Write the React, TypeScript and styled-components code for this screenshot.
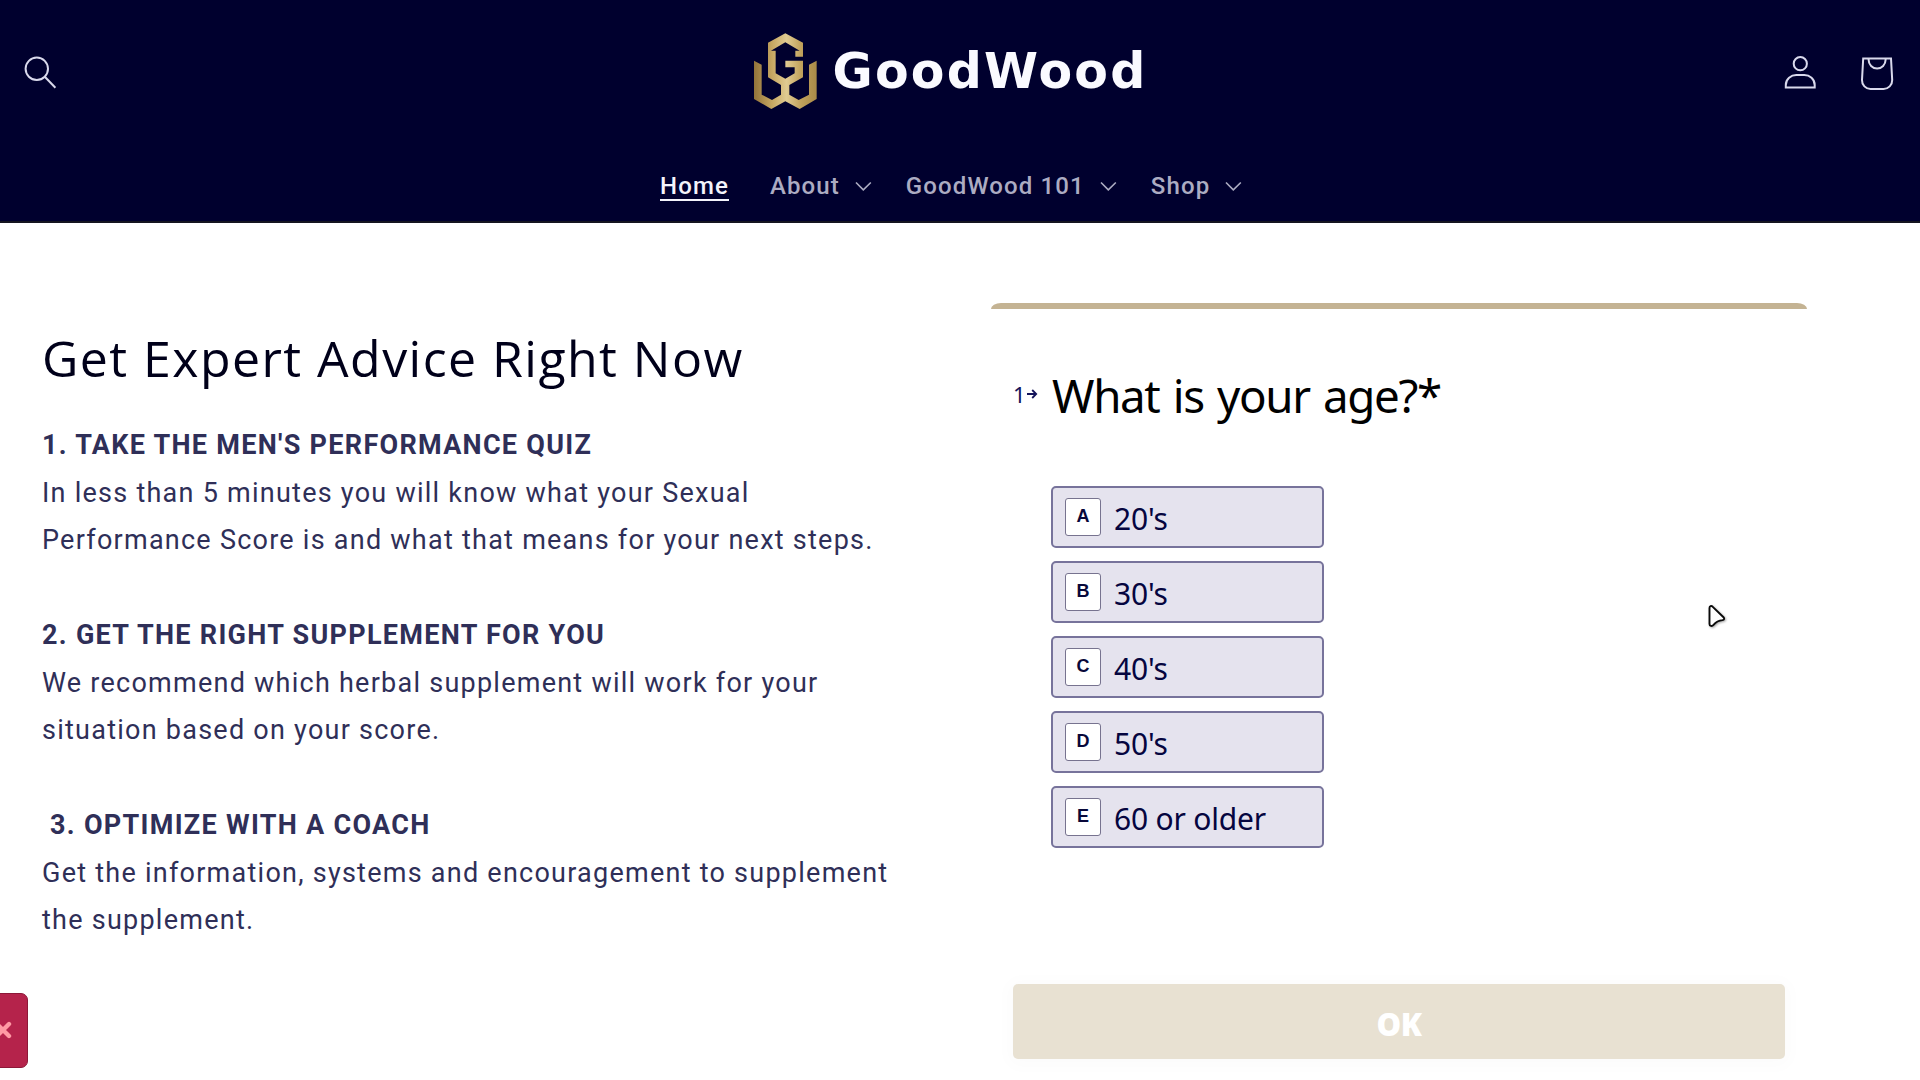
import React from "react";
import styled, { createGlobalStyle } from "styled-components";

const GlobalStyle = createGlobalStyle`
  *, *::before, *::after { box-sizing: border-box; }
  html, body { margin: 0; padding: 0; background: #ffffff; }
  body { overflow: hidden; }
`;

const Page = styled.div`
  position: relative;
  width: 1920px;
  height: 1080px;
  overflow: hidden;
  display: flex;
  flex-direction: column;
  background: #ffffff;
  font-family: Roboto, "Liberation Sans", sans-serif;
`;

const Header = styled.header`
  flex: none;
  height: 223px;
  background: #00002e;
  border-bottom: 2px solid #14141f;
  display: flex;
  flex-direction: column;
`;

const HeaderTop = styled.div`
  height: 145px;
  display: flex;
  justify-content: space-between;
  align-items: flex-start;
  padding: 32px 25px 0 22px;
`;

const IconButton = styled.button`
  display: flex;
  padding: 0;
  border: 0;
  background: none;
  color: #d9d9ec;
`;

const SearchButton = styled(IconButton)`
  margin-top: 22px;
`;

const HeaderActions = styled.div`
  display: flex;
  gap: 42px;
  margin-top: 22px;
`;

const Logo = styled.a`
  display: flex;
  gap: 16px;
  margin-left: 60px;
  padding-top: 1px;
`;

const LogoName = styled.span`
  font: 700 49px/58px "DejaVu Sans", sans-serif;
  letter-spacing: 2.2px;
  color: #fafaff;
  margin-top: 10px;
  white-space: nowrap;
`;

const Nav = styled.nav`
  display: flex;
  padding-left: 660px;
  gap: 34px;
  margin-top: 26px;
`;

const NavItem = styled.a<{ $active?: boolean }>`
  display: flex;
  height: 30px;
  gap: 15px;
  align-items: center;
  font-size: 24px;
  line-height: 30px;
  font-weight: 500;
  letter-spacing: 1.12px;
  white-space: nowrap;
  color: ${(p) => (p.$active ? "#f4f4fb" : "#acacc2")};
  margin-right: ${(p) => (p.$active ? "7px" : "0")};
`;

const NavText = styled.span<{ $active?: boolean }>`
  height: 30px;
  border-bottom: ${(p) => (p.$active ? "2px solid #f4f4fb" : "0")};
`;

const Main = styled.main`
  flex: 1;
  display: flex;
  align-items: flex-start;
`;

const Advice = styled.section`
  width: 991px;
  padding: 105px 0 0 42px;
`;

const Title = styled.h1`
  margin: 0 0 34px;
  font: 430 50px/60px "Open Sans", "Noto Sans", sans-serif;
  letter-spacing: 1.45px;
  color: #00001a;
`;

const Step = styled.div`
  margin-bottom: 47.5px;
  font-size: 27px;
  line-height: 47.5px;
  letter-spacing: 1.25px;
  color: #2f2f58;
  white-space: pre;
`;

const StepTitle = styled.strong`
  display: block;
  font-weight: 700;
  letter-spacing: 1.29px;
`;

const Quiz = styled.section`
  width: 816px;
  margin-top: 80px;
  display: flex;
  flex-direction: column;
`;

const ProgressBar = styled.div`
  height: 6px;
  border-radius: 10px 10px 0 0 / 6px 6px 0 0;
  background: #c4b393;
`;

const Question = styled.div`
  display: flex;
  height: 60px;
  margin-top: 56px;
  padding-left: 22px;
`;

const QuestionNumber = styled.span`
  width: 39px;
  display: flex;
  gap: 1px;
  padding-top: 14px;
  font: 400 22px/30px "Noto Sans", sans-serif;
  color: #14145a;
`;

const ArrowMark = styled.svg`
  margin-top: 10px;
`;

const QuestionText = styled.h2`
  margin: 0;
  font: 400 45.7px/60px "Noto Sans", sans-serif;
  letter-spacing: -1.35px;
  word-spacing: 2.8px;
  color: #000000;
  white-space: nowrap;
`;

const Options = styled.ul`
  list-style: none;
  margin: 61px 0 0 60px;
  padding: 0;
  display: flex;
  flex-direction: column;
  gap: 13px;
`;

const Option = styled.li`
  width: 273px;
  height: 62px;
  display: flex;
  padding: 10px 13px;
  gap: 13px;
  border: 2px solid #77739b;
  border-radius: 5px;
  background: #e5e3ee;
`;

const OptionKey = styled.span`
  width: 36px;
  height: 38px;
  margin-left: -1px;
  border: 1px solid #77738f;
  border-radius: 3px;
  background: #ffffff;
  font: 700 18px/35px "Liberation Sans", Arial, sans-serif;
  text-align: center;
  color: #08083a;
`;

const OptionLabel = styled.span`
  font: 400 30px/40px "Noto Sans", sans-serif;
  letter-spacing: -0.2px;
  color: #05053f;
  padding-top: 1px;
`;

const Submit = styled.button`
  width: 772px;
  height: 75px;
  margin: 136px 0 0 22px;
  padding: 4px 0 0;
  border: 0;
  border-radius: 5px;
  background: #e8e1d2;
  box-shadow: 0 2px 16px 6px rgba(0, 0, 0, 0.016);
  color: #ffffff;
  font: 800 31px/40px "Open Sans", "Noto Sans", sans-serif;
  letter-spacing: -0.5px;
`;

const DismissTab = styled.button`
  position: absolute;
  left: -47px;
  top: 993px;
  width: 75px;
  height: 75px;
  padding: 0 15px 2px 0;
  display: flex;
  align-items: center;
  justify-content: flex-end;
  border: 1px solid #8d1838;
  border-radius: 7px;
  background: #b5234b;
`;

const Pointer = styled.svg`
  position: absolute;
  left: 1705px;
  top: 602px;
`;

const Chevron = () => (
  <svg width="17" height="10" viewBox="0 0 17 10" fill="none" stroke="currentColor" strokeWidth="1.6">
    <path d="M1 1.500l7.300 7.400L15.800 1.500" />
  </svg>
);

const LogoMark = () => (
  <svg width="63" height="77" viewBox="41 37 189 231">
    <defs>
      <linearGradient id="gold" x1="41" x2="229" y1="0" y2="0" gradientUnits="userSpaceOnUse">
        <stop offset="0" stopColor="#92733a" />
        <stop offset="0.3" stopColor="#c8a964" />
        <stop offset="0.52" stopColor="#e0cb92" />
        <stop offset="0.75" stopColor="#c1a25c" />
        <stop offset="1" stopColor="#a98a48" />
      </linearGradient>
    </defs>
    <path
      fill="url(#gold)"
      d="M135 38L188 66V108H165V90H178L135 65L92 90H106V158L135 174L163 158V140H135V120H188V170L147 193V222L175 238L206 222V132L229 120V235L178 265L135 242L93 265L41 235V120L64 132V222L95 238L122 222V193L83 170V66Z"
    />
  </svg>
);

const menu = [
  { label: "Home", active: true },
  { label: "About" },
  { label: "GoodWood 101" },
  { label: "Shop" },
];

const steps = [
  {
    title: "1. TAKE THE MEN'S PERFORMANCE QUIZ",
    body: "In less than 5 minutes you will know what your Sexual\nPerformance Score is and what that means for your next steps.",
  },
  {
    title: "2. GET THE RIGHT SUPPLEMENT FOR YOU",
    body: "We recommend which herbal supplement will work for your\nsituation based on your score.",
  },
  {
    title: "\u00a03. OPTIMIZE WITH A COACH",
    body: "Get the information, systems and encouragement to supplement\nthe supplement.",
  },
];

const options = [
  ["A", "20's"],
  ["B", "30's"],
  ["C", "40's"],
  ["D", "50's"],
  ["E", "60 or older"],
];

export default function App() {
  return (
    <Page>
      <GlobalStyle />
      <Header>
        <HeaderTop>
          <SearchButton aria-label="Search">
            <svg width="36" height="36" viewBox="0 0 36 36" fill="none" stroke="currentColor" strokeWidth="2">
              <circle cx="14.8" cy="14.8" r="11.2" />
              <path d="M22.8 22.8L33.4 33.8" />
            </svg>
          </SearchButton>
          <Logo>
            <LogoMark />
            <LogoName>GoodWood</LogoName>
          </Logo>
          <HeaderActions>
            <IconButton aria-label="Account">
              <svg width="34" height="38" viewBox="0 0 34 38" fill="none" stroke="currentColor" strokeWidth="2">
                <circle cx="17.3" cy="9.7" r="6.6" />
                <path d="M2.8 33.6V31C2.8 25 8 21 13.300 21h8c5.400 0 10.400 4 10.400 10v2.600z" />
              </svg>
            </IconButton>
            <IconButton aria-label="Cart">
              <svg width="36" height="38" viewBox="0 0 36 38" fill="none" stroke="currentColor" strokeWidth="2">
                <path d="M4.200 4.500H32L33.200 26c.2 5-4 9-8.600 9H11.500C6.800 35 2.800 31 3 26z" />
                <path d="M9.600 4.500v1.300a8.500 8.700 0 0 0 17 0V4.500" />
              </svg>
            </IconButton>
          </HeaderActions>
        </HeaderTop>
        <Nav>
          {menu.map((m) => (
            <NavItem key={m.label} $active={m.active}>
              <NavText $active={m.active}>{m.label}</NavText>
              {!m.active && <Chevron />}
            </NavItem>
          ))}
        </Nav>
      </Header>
      <Main>
        <Advice>
          <Title>Get Expert Advice Right Now</Title>
          {steps.map((s) => (
            <Step key={s.title}>
              <StepTitle>{s.title}</StepTitle>
              {s.body}
            </Step>
          ))}
        </Advice>
        <Quiz>
          <ProgressBar />
          <Question>
            <QuestionNumber>
              1
              <ArrowMark width="11" height="10" viewBox="0 0 11 10" fill="none" stroke="currentColor" strokeWidth="1.8">
                <path d="M0 5h9M5.200 1l4 4-4 4" />
              </ArrowMark>
            </QuestionNumber>
            <QuestionText>What is your age?*</QuestionText>
          </Question>
          <Options>
            {options.map(([key, label]) => (
              <Option key={key}>
                <OptionKey>{key}</OptionKey>
                <OptionLabel>{label}</OptionLabel>
              </Option>
            ))}
          </Options>
          <Submit>OK</Submit>
        </Quiz>
      </Main>
      <DismissTab aria-label="Dismiss">
        <svg width="18" height="18" viewBox="0 0 18 18" stroke="#ff9aa4" strokeWidth="4.400" strokeLinecap="round">
          <path d="M3 3l12 12M15 3L3 15" />
        </svg>
      </DismissTab>
      <Pointer width="26" height="32" viewBox="0 0 26 32">
        <path
          d="M4.500 6c0-2 1.800-2.400 3-1.400l11 10.600c1.300 1.400.6 2.700-1 2.900-4 .4-6.500 1.800-9 4.800-1.500 1.700-4 1.200-4-1z"
          fill="#ffffff"
          stroke="#0a0a0a"
          strokeWidth="1.900"
          filter="drop-shadow(1px 1px 1px rgba(0,0,0,0.35))"
        />
      </Pointer>
    </Page>
  );
}
